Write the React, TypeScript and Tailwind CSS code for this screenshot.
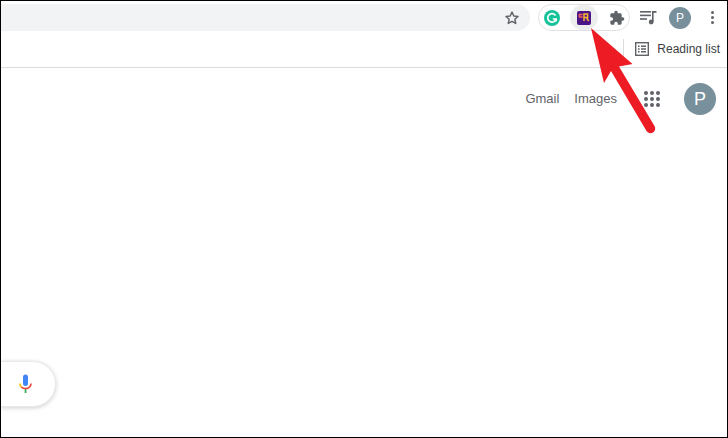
import React from 'react';

function Star() {
  return (
    <svg width="16" height="16" viewBox="0 0 24 24" fill="none" stroke="#5f6368" strokeWidth="2.2" strokeLinejoin="round">
      <path d="M12 3.200l2.700 5.800 6.300.7-4.700 4.300 1.300 6.200L12 17.100l-5.600 3.100 1.300-6.200L3 9.700l6.300-.7z" />
    </svg>
  );
}

function Grammarly() {
  return (
    <div className="w-[16px] h-[16px] rounded-full bg-[#15c39a] flex items-center justify-center">
      <svg width="12" height="12" viewBox="0 0 12 12" fill="none" stroke="#fff" strokeWidth="1.7">
        <path d="M9.600 3.400A4.300 4.300 0 1 0 10.200 7H6.800" />
        <path d="M10 7.200v2.400" />
      </svg>
    </div>
  );
}

function RExtension() {
  return (
    <div className="w-[14px] h-[14px] rounded-[2px] bg-[#4a1486] flex items-center justify-center">
      <svg width="12" height="9" viewBox="0 0 12 9" fill="none" strokeWidth="1.5">
        <path d="M4.600 1.500H1.400v2.600h3.200" stroke="#f0605a" />
        <path d="M6 8V1h3.600v3.400H6M8.400 4.400L10.600 8" stroke="#f7b733" />
      </svg>
    </div>
  );
}

function Puzzle() {
  return (
    <svg width="16" height="16" viewBox="0 0 24 24" fill="#5f6368">
      <path d="M20.500 11H19V7a2 2 0 0 0-2-2h-4V3.500a2.500 2.500 0 0 0-5 0V5H4a2 2 0 0 0-2 2v3.800h1.500a2.700 2.700 0 0 1 0 5.400H2V20a2 2 0 0 0 2 2h3.800v-1.500a2.700 2.700 0 0 1 5.400 0V22H17a2 2 0 0 0 2-2v-4h1.500a2.500 2.500 0 0 0 0-5z" />
    </svg>
  );
}

function MediaQueue() {
  return (
    <svg width="17" height="15" viewBox="0 0 17 15" fill="#5f6368">
      <rect x="0" y="1" width="11" height="1.600" />
      <rect x="0" y="4.600" width="11" height="1.600" />
      <rect x="0" y="8.200" width="7" height="1.600" />
      <rect x="12" y="1" width="4.500" height="1.800" />
      <rect x="12" y="1" width="1.600" height="11" />
      <circle cx="11.200" cy="12" r="2.400" />
    </svg>
  );
}

function ListIcon() {
  return (
    <svg width="14" height="14" viewBox="0 0 14 14" fill="none" stroke="#5f6368" strokeWidth="1.400">
      <rect x="0.700" y="0.700" width="12.600" height="12.600" />
      <path d="M3 4.200h1.600M6 4.200h5M3 7h1.600M6 7h5M3 9.800h1.600M6 9.800h5" />
    </svg>
  );
}

function AppsGrid() {
  const dots = [0, 1, 2, 3, 4, 5, 6, 7, 8];
  return (
    <div className="grid grid-cols-3 gap-[2px] w-[16px]">
      {dots.map((d) => (
        <span key={d} className="w-[4px] h-[4px] rounded-full bg-[#5f6368]" />
      ))}
    </div>
  );
}

function Mic() {
  return (
    <svg width="14" height="20" viewBox="0 0 14 20" fill="none">
      <rect x="4" y="0.500" width="5" height="11.500" rx="2.500" fill="#4285f4" />
      <path d="M1 9.500c0 1.400.5 2.600 1.400 3.500" stroke="#fbbc05" strokeWidth="1.600" />
      <path d="M2.400 13c1 1 2.400 1.600 4.100 1.600s3.100-.6 4.100-1.600c.9-.9 1.400-2.100 1.400-3.500" stroke="#ea4335" strokeWidth="1.600" />
      <rect x="5.700" y="15.200" width="1.700" height="3.800" fill="#34a853" />
    </svg>
  );
}

function Arrow() {
  return (
    <svg className="absolute left-0 top-0 pointer-events-none" width="728" height="438" viewBox="0 0 728 438">
      <path d="M590 27L631.500 63 618 65.500 653.500 125A4.600 4.600 0 0 1 645.500 130L610 70 603 82z" fill="#ed1c24" />
    </svg>
  );
}

export default function App() {
  return (
    <div className="relative w-[728px] h-[438px] bg-white border border-black overflow-hidden flex flex-col" style={{ fontFamily: '"Liberation Sans", Arial, sans-serif' }}>
      {/* Toolbar */}
      <div className="h-[33px] flex items-center">
        <div className="w-[529px] h-[27px] bg-[#f1f3f4] rounded-r-full flex items-center justify-end pr-[10px]">
          <Star />
        </div>
        <div className="ml-[8px] w-[92px] h-[27px] rounded-full border border-[#dfe1e5] flex items-center relative">
          <div className="ml-[5px] w-[16px] flex justify-center"><Grammarly /></div>
          <div className="ml-[10px] w-[28px] h-[25px] rounded-full bg-[#eceded] flex items-center justify-center"><RExtension /></div>
          <div className="ml-[11px]"><Puzzle /></div>
        </div>
        <div className="ml-[10px]"><MediaQueue /></div>
        <div className="ml-[12px] w-[22px] h-[22px] rounded-full bg-[#78909c] text-white text-[12px] flex items-center justify-center">P</div>
        <div className="ml-[20px] flex flex-col gap-[2px]">
          <span className="w-[3px] h-[3px] rounded-full bg-[#5f6368]" />
          <span className="w-[3px] h-[3px] rounded-full bg-[#5f6368]" />
          <span className="w-[3px] h-[3px] rounded-full bg-[#5f6368]" />
        </div>
      </div>

      {/* Bookmarks bar */}
      <div className="h-[34px] border-b border-[#dadce0] flex items-center justify-end pr-[7px] pb-[3px]">
        <div className="w-[1px] h-[20px] bg-[#dadce0] mr-[11px]" />
        <ListIcon />
        <span className="ml-[8px] text-[12px] text-[#3c4043]">Reading list</span>
      </div>

      {/* Page */}
      <div className="flex-1 flex flex-col justify-between pb-[30px]">
        <div className="flex items-center justify-end h-[32px] mt-[15px] pr-[11px] text-[13px] text-[#5f6368]">
          <span>Gmail</span>
          <span className="ml-[15px]">Images</span>
          <div className="ml-[27px]"><AppsGrid /></div>
          <div className="ml-[24px] w-[32px] h-[32px] rounded-full bg-[#78909c] text-white text-[18px] flex items-center justify-center">P</div>
        </div>
        <div className="w-[55px] h-[46px] bg-white rounded-r-full border border-l-0 border-[#e8eaed] shadow-[0_1px_4px_rgba(32,33,36,0.22)] flex items-center justify-end pr-[22px]">
          <Mic />
        </div>
      </div>

      <Arrow />
    </div>
  );
}
